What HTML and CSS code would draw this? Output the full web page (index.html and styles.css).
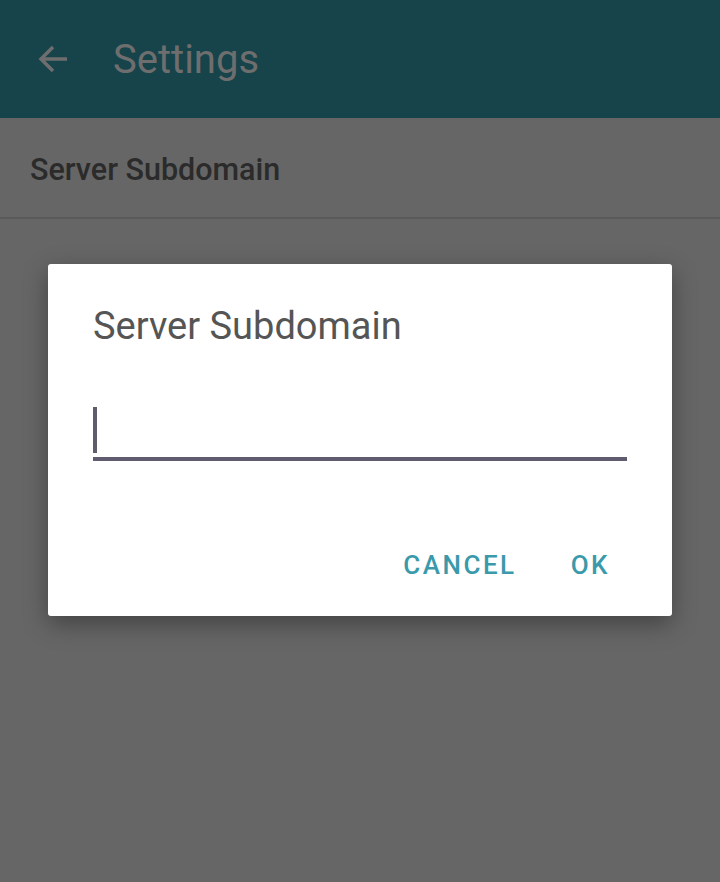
FILE: index.html
```html
<!DOCTYPE html>
<html>
<head>
<meta charset="utf-8">
<link rel="stylesheet" href="styles.css">
</head>
<body>
<div class="screen">
  <header class="toolbar">
    <svg class="back" width="30" height="30" viewBox="0 0 30 30"><path d="M29 15H3M15 3L3 15l12 12" fill="none" stroke="#6e6e6e" stroke-width="3.5"/></svg>
    <span class="toolbar-title">Settings</span>
  </header>
  <div class="pref-item">Server Subdomain</div>
  <div class="dialog">
    <div class="dialog-title">Server Subdomain</div>
    <div class="field"><span class="cursor"></span></div>
    <div class="actions">
      <span class="btn">CANCEL</span>
      <span class="btn">OK</span>
    </div>
  </div>
</div>
</body>
</html>
```
FILE: styles.css
```css
html, body { margin: 0; padding: 0; }
body { background: #666666; font-family: Roboto, "Noto Sans", sans-serif; }
.screen { position: relative; width: 720px; height: 882px; overflow: hidden; background: #666666; }
.toolbar { height: 118px; background: #17434a; display: flex; align-items: center; padding-left: 38px; box-sizing: border-box; }
.back { display: block; margin-right: 45px; }
.toolbar-title { color: #6e6e6e; font-size: 40px; line-height: 1; padding-top: 2px; }
.pref-item { height: 101px; box-sizing: border-box; border-bottom: 2px solid #5a5a5a; display: flex; align-items: center; padding-left: 30px; padding-top: 3px; font-size: 30.5px; font-weight: 500; color: #2b2b2b; }
.dialog { position: absolute; left: 48px; top: 264px; width: 624px; height: 352px; background: #fff; border-radius: 3px; box-shadow: 0 8px 24px rgba(0,0,0,0.35); box-sizing: border-box; padding: 38px 45px 0 45px; }
.dialog-title { font-size: 38px; color: #555555; line-height: 48px; }
.field { margin-top: 49px; height: 54px; border-bottom: 4px solid #615b70; display: flex; align-items: flex-end; padding-bottom: 4px; box-sizing: content-box; }
.cursor { width: 4px; height: 46px; background: #615b70; }
.actions { display: flex; justify-content: flex-end; gap: 54px; margin-top: 91px; padding-right: 17px; }
.btn { color: #3a9aab; font-size: 26px; font-weight: 500; letter-spacing: 2.5px; line-height: 1; }
```
